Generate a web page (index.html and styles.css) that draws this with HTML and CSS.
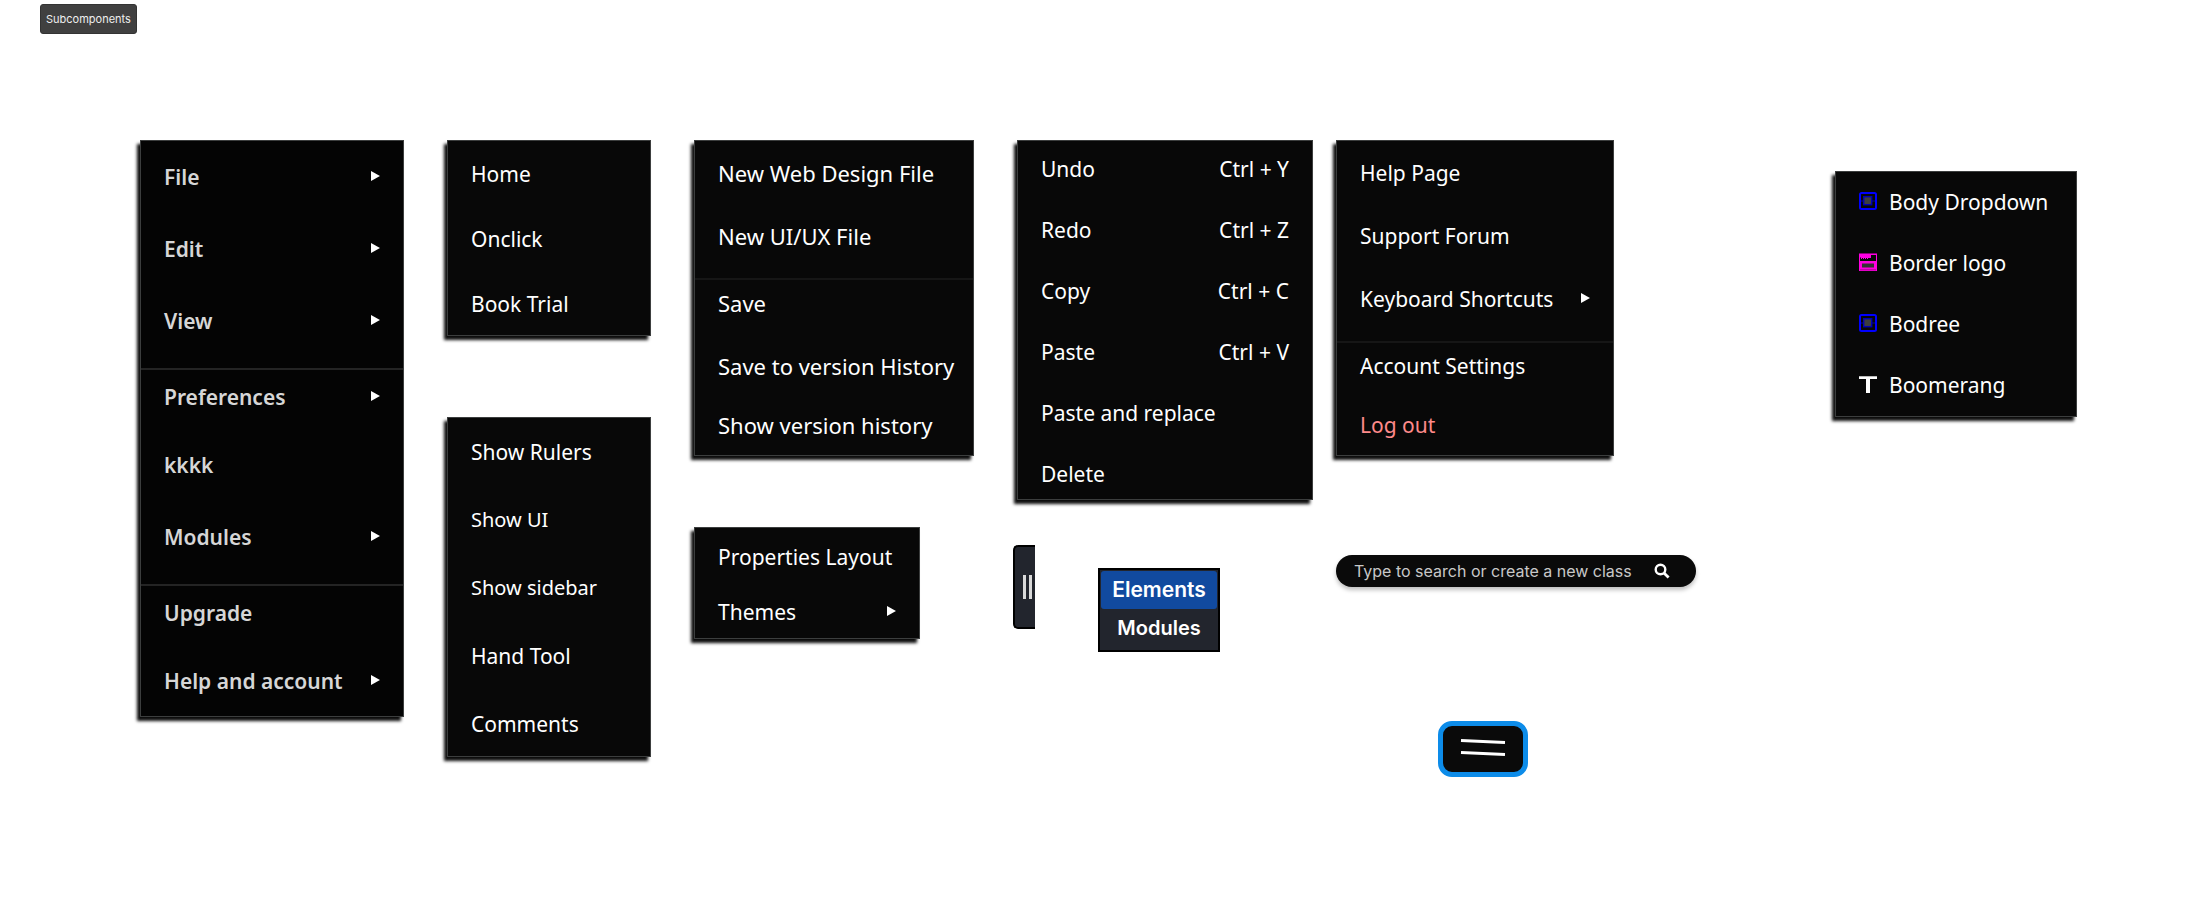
FILE: index.html
```html
<!DOCTYPE html>
<html lang="en">
<head>
<meta charset="utf-8">
<meta name="viewport" content="width=device-width, initial-scale=1">
<title>Subcomponents</title>
<link rel="stylesheet" href="styles.css">
</head>
<body>
<header class="page-head"><h1 class="tag">Subcomponents</h1></header>
<main class="board">
  <div class="column column--main">
    <nav class="menu menu--main" aria-label="Main menu">
      <div class="group">
        <button class="item">File<span class="arrow"></span></button>
        <button class="item">Edit<span class="arrow"></span></button>
        <button class="item">View<span class="arrow"></span></button>
      </div>
      <div class="group">
        <button class="item">Preferences<span class="arrow"></span></button>
        <button class="item item--tight">kkkk</button>
        <button class="item">Modules<span class="arrow"></span></button>
      </div>
      <div class="group">
        <button class="item">Upgrade</button>
        <button class="item item--tight">Help and account<span class="arrow"></span></button>
      </div>
    </nav>
  </div>

  <div class="column column--view">
    <nav class="menu menu--home" aria-label="Home">
      <button class="item">Home</button>
      <button class="item">Onclick</button>
      <button class="item">Book Trial</button>
    </nav>
    <nav class="menu menu--view" aria-label="View">
      <button class="item">Show Rulers</button>
      <button class="item item--small">Show UI</button>
      <button class="item item--small">Show sidebar</button>
      <button class="item">Hand Tool</button>
      <button class="item">Comments</button>
    </nav>
  </div>

  <div class="column column--file">
    <nav class="menu menu--split menu--file" aria-label="File">
      <div class="group">
        <button class="item">New Web Design File</button>
        <button class="item">New UI/UX File</button>
      </div>
      <div class="group">
        <button class="item">Save</button>
        <button class="item">Save to version History</button>
        <button class="item item--tight">Show version history</button>
      </div>
    </nav>
    <nav class="menu menu--preferences" aria-label="Preferences">
      <button class="item">Properties Layout</button>
      <button class="item">Themes<span class="arrow"></span></button>
    </nav>
  </div>

  <div class="column column--edit">
    <nav class="menu menu--edit" aria-label="Edit">
      <button class="item">Undo<kbd class="keys">Ctrl + Y</kbd></button>
      <button class="item">Redo<kbd class="keys">Ctrl + Z</kbd></button>
      <button class="item">Copy<kbd class="keys">Ctrl + C</kbd></button>
      <button class="item">Paste<kbd class="keys">Ctrl + V</kbd></button>
      <button class="item">Paste and replace</button>
      <button class="item">Delete</button>
    </nav>
    <div class="tools">
      <button class="handle" aria-label="Resize panel"><span class="grip"></span><span class="grip"></span></button>
      <div class="tabs">
        <button class="tab tab--active">Elements</button>
        <button class="tab">Modules</button>
      </div>
    </div>
  </div>

  <div class="column column--help">
    <nav class="menu menu--split menu--help" aria-label="Help and account">
      <div class="group">
        <button class="item">Help Page</button>
        <button class="item">Support Forum</button>
        <button class="item">Keyboard Shortcuts<span class="arrow"></span></button>
      </div>
      <div class="group">
        <button class="item">Account Settings</button>
        <button class="item item--tight item--danger">Log out</button>
      </div>
    </nav>
    <form class="search">
      <input class="search-input" type="text" aria-label="Search classes" placeholder="Type to search or create a new class">
      <button class="search-button" type="button" aria-label="Search">
        <svg width="16" height="16" viewBox="0 0 16 16" fill="none" stroke="#fff"><circle cx="6.5" cy="6.5" r="4.8" stroke-width="2.4"/><path d="M10 10l4.6 4.6" stroke-width="2.8"/></svg>
      </button>
    </form>
    <button class="burger" aria-label="Open menu">
      <svg width="46" height="18" viewBox="0 0 46 18" fill="none" stroke="#fff" stroke-width="3"><path d="M1 1.5l44 2M1 13.5l44 2"/></svg>
    </button>
  </div>

  <div class="column column--dropdown">
    <nav class="menu menu--dropdown" aria-label="Elements">
      <button class="item">
        <svg class="icon" width="18" height="18" viewBox="0 0 18 18" fill="none"><rect x="1" y="1" width="16" height="16" rx="1.5" stroke="#00f" stroke-width="2"/><path d="M2 9h3M13 9h3" stroke="#0000a8"/><rect x="4.7" y="4.7" width="8" height="8" fill="#3d3d3d" stroke="#0000b4" stroke-width="1.4"/></svg>
        Body Dropdown</button>
      <button class="item">
        <svg class="icon" width="18" height="18" viewBox="0 0 18 18"><path fill="#ff00e1" d="M0 0h18v18H0z"/><path fill="#080808" d="M12 2h5v6H1V4.500h1V6h1V5h1v1h1V5h1v1h1V5h1v1h1V5h3z"/><path fill="#8a0079" d="M0 0h18v1H0zM1 16.500h16v.8H1z"/><path fill="#333" d="M3 10.500h12v4H3z"/></svg>
        Border logo</button>
      <button class="item">
        <svg class="icon" width="18" height="18" viewBox="0 0 18 18" fill="none"><rect x="1" y="1" width="16" height="16" rx="1.5" stroke="#00f" stroke-width="2"/><path d="M2 9h3M13 9h3" stroke="#0000a8"/><rect x="4.7" y="4.7" width="8" height="8" fill="#3d3d3d" stroke="#0000b4" stroke-width="1.4"/></svg>
        Bodree</button>
      <button class="item">
        <svg class="icon" width="18" height="18" viewBox="0 0 18 18"><rect y="1" width="18" height="3" fill="#fff"/><rect y="1" width="18" height="1" fill="#bbb"/><rect x="7" y="4" width="4" height="14" fill="#fff"/></svg>
        Boomerang</button>
    </nav>
  </div>
</main>
</body>
</html>
```
FILE: styles.css
```css
* { box-sizing: border-box; }

body {
  margin: 0;
  background: #fff;
  font-family: "Noto Sans", "Open Sans", sans-serif;
}

button {
  margin: 0;
  padding: 0;
  border: 0;
  background: none;
  color: inherit;
  font: inherit;
  cursor: pointer;
}

.page-head { padding: 4px 40px 0; }

.tag {
  display: inline-block;
  margin: 0;
  padding: 0 5px;
  border: 1px solid #333;
  border-radius: 3px;
  background: #404040;
  color: #eee;
  font: 400 11px/28px Inter, sans-serif;
  vertical-align: top;
}

.board {
  display: flex;
  align-items: flex-start;
  padding: 106px 40px 40px 140px;
}

.column {
  display: flex;
  flex: none;
  flex-direction: column;
  align-items: flex-start;
}

.column--main { width: 264px; }
.column--view { width: 204px; margin-left: 43px; gap: 82px; }
.column--file { width: 280px; margin-left: 43px; gap: 71px; }
.column--edit { width: 300px; margin-left: 39px; gap: 45px; }
.column--help { width: 360px; margin-left: 23px; }
.column--dropdown { width: 242px; margin-left: 139px; padding-top: 31px; }

/* Menus */
.menu {
  display: flex;
  flex-direction: column;
  width: 100%;
  border: 1px solid #3c3e3e;
  background: #080808;
  box-shadow: -3px 4px 3px rgba(0, 0, 0, 0.95);
  color: #fff;
  font-size: 21px;
  line-height: 28px;
}

.group { display: flex; flex-direction: column; }
.group + .group { border-top: 2px solid #161616; }

.item {
  display: flex;
  align-items: center;
  padding: 0 23px;
  text-align: left;
  white-space: nowrap;
}

.item--small { font-size: 20px; }
.item--danger { color: #ff8a8a; }

.arrow {
  margin: 0 0 2px auto;
  border-left: 9px solid #fff;
  border-top: 5px solid transparent;
  border-bottom: 5px solid transparent;
}

.keys { margin-left: auto; font-family: inherit; font-size: 21px; }

.menu--main { background: #040404; color: #d6d6d6; font-weight: 600; }
.menu--main .group { padding: 13px 0 33px; }
.menu--main .group:first-child { padding-top: 22px; }
.menu--main .group:last-child { padding-bottom: 21px; }
.menu--main .group + .group { border-color: #242424; }
.menu--main .item + .item { margin-top: 44px; }
.menu--main .item + .item--tight { margin-top: 40px; }

.menu--home { gap: 37px; padding: 19px 0 17px; }
.menu--view { gap: 40px; padding: 20px 0 18px; }
.column--view { gap: 81px; }

.menu--file { font-size: 22px; }
.menu--split .group { padding: 9px 0 16px; }
.menu--split .group:first-child { padding: 18px 0 28px; }
.menu--split .item + .item { margin-top: 35px; }
.menu--split .item + .item--tight { margin-top: 31px; }

.menu--preferences { gap: 27px; width: 226px; padding: 15px 0 12px; }

.menu--edit { gap: 33px; width: auto; margin-left: 4px; padding: 14px 0 11px; align-self: stretch; }

.menu--help { width: 278px; }

.menu--dropdown { gap: 33px; padding: 16px 0 17px; }
.icon { flex: none; margin: 0 12px 2px 0; }

/* Panel handle and tabs */
.tools { display: flex; align-items: flex-start; gap: 63px; }

.handle {
  display: flex;
  align-items: center;
  justify-content: flex-end;
  gap: 3px;
  width: 22px;
  height: 84px;
  padding-right: 3px;
  border: 2px solid #000;
  border-right: 0;
  border-radius: 5px 0 0 5px;
  background: #22252d;
}

.grip { width: 3px; height: 24px; background: #d9d9d9; }

.tabs {
  display: flex;
  flex-direction: column;
  width: 122px;
  margin-top: 23px;
  padding: 1px 1px 2px;
  border: 2px solid #000;
  background: #22252d;
}

.tab {
  border-radius: 3px;
  color: #fff;
  font: 600 20px/39px Inter, sans-serif;
}

.tab--active { background: #114a9f; font-size: 21px; line-height: 38px; }

/* Search */
.search {
  display: flex;
  align-items: center;
  width: 100%;
  height: 32px;
  margin-top: 99px;
  padding: 0 26px 0 18px;
  border-radius: 16px;
  background: #0a0a0a;
  box-shadow: 0 3px 4px rgba(0, 0, 0, 0.25);
}

.search-input {
  flex: 1;
  min-width: 0;
  padding: 0;
  border: 0;
  outline: 0;
  background: none;
  color: #fff;
  font: 400 16px/24px Inter, sans-serif;
}

.search-input::placeholder { color: #c8c8c8; opacity: 1; }
.search-button { display: flex; }

.burger {
  display: flex;
  align-items: center;
  justify-content: center;
  width: 90px;
  height: 56px;
  margin: 134px 0 0 102px;
  padding-bottom: 2px;
  border: 5px solid #0d8ce9;
  border-radius: 14px;
  background: #0a0a0a;
}
```
